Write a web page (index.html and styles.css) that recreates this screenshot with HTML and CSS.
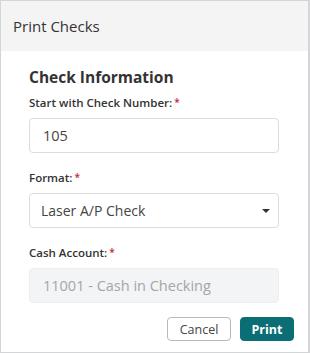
FILE: index.html
```html
<!DOCTYPE html>
<html lang="en">
<head>
    <meta charset="UTF-8">
    <title>Print Checks</title>
    <link rel="stylesheet" href="styles.css">
</head>
<body>
    <div class="dialog">
        <div class="dialog-header">
            <h1 class="dialog-title">Print Checks</h1>
        </div>

        <div class="dialog-body">
            <h2 class="section-title">Check Information</h2>

            <div class="field">
                <label class="field-label">Start with Check Number:<span class="required">*</span></label>
                <div class="input">105</div>
            </div>

            <div class="field">
                <label class="field-label">Format:<span class="required">*</span></label>
                <div class="input select">
                    <span>Laser A/P Check</span>
                    <span class="caret"></span>
                </div>
            </div>

            <div class="field">
                <label class="field-label">Cash Account:<span class="required">*</span></label>
                <div class="input disabled">11001 - Cash in Checking</div>
            </div>
        </div>

        <div class="dialog-footer">
            <button class="btn btn-cancel">Cancel</button>
            <button class="btn btn-print">Print</button>
        </div>
    </div>
</body>
</html>
```

FILE: styles.css
```css
/* Basic styling */
body {
    margin: 0;
    font-family: 'Open Sans', 'Noto Sans', sans-serif;
    background: #fff;
    color: #333;
}

.dialog {
    width: 310px;
    height: 353px;
    box-sizing: border-box;
    border: 1px solid #d3d6d6;
    border-right-width: 2px;
    display: flex;
    flex-direction: column;
}

.dialog-header {
    height: 50px;
    background: #f4f4f4;
    display: flex;
    align-items: center;
    padding-left: 12px;
}

.dialog-title {
    margin: 0;
    font-size: 15px;
    font-weight: 400;
    color: #333;
}

.dialog-body {
    padding: 14px 29px 0 28px;
}

.section-title {
    margin: 0 0 4px;
    font-size: 15.5px;
    line-height: 24px;
    font-weight: 700;
    color: #333;
}

.field {
    margin-bottom: 15px;
}

.field:last-child {
    margin-bottom: 14px;
}

.field-label {
    display: block;
    font-size: 11.5px;
    line-height: 18px;
    font-weight: 600;
    color: #333;
    margin-bottom: 6px;
}

.required {
    color: #c0272d;
    font-size: 10px;
    margin-left: 2px;
    vertical-align: 1px;
}

.input {
    height: 35px;
    box-sizing: border-box;
    border: 1px solid #dcdcdc;
    border-radius: 4px;
    padding: 0 13px;
    display: flex;
    align-items: center;
    font-size: 14.5px;
    color: #444;
}

.select {
    justify-content: space-between;
    padding: 0 8px 0 11px;
    font-size: 14px;
}

.caret {
    width: 0;
    height: 0;
    border-left: 4px solid transparent;
    border-right: 4px solid transparent;
    border-top: 4px solid #333;
}

.disabled {
    background: #f3f4f5;
    border-color: #eceef0;
    color: #a3a6a8;
}

.dialog-footer {
    display: flex;
    justify-content: flex-end;
    gap: 9px;
    padding: 0 14px 0 0;
}

.btn {
    height: 24px;
    border-radius: 4px;
    font-family: 'Open Sans', 'Noto Sans', sans-serif;
    font-size: 12.5px;
    padding: 0;
    cursor: pointer;
}

.btn-cancel {
    width: 64px;
    background: #fff;
    border: 1px solid #b9b9b9;
    color: #444;
}

.btn-print {
    width: 54px;
    background: #0b6e74;
    border: 1px solid #0b6e74;
    color: #fff;
    font-weight: 700;
}
```
